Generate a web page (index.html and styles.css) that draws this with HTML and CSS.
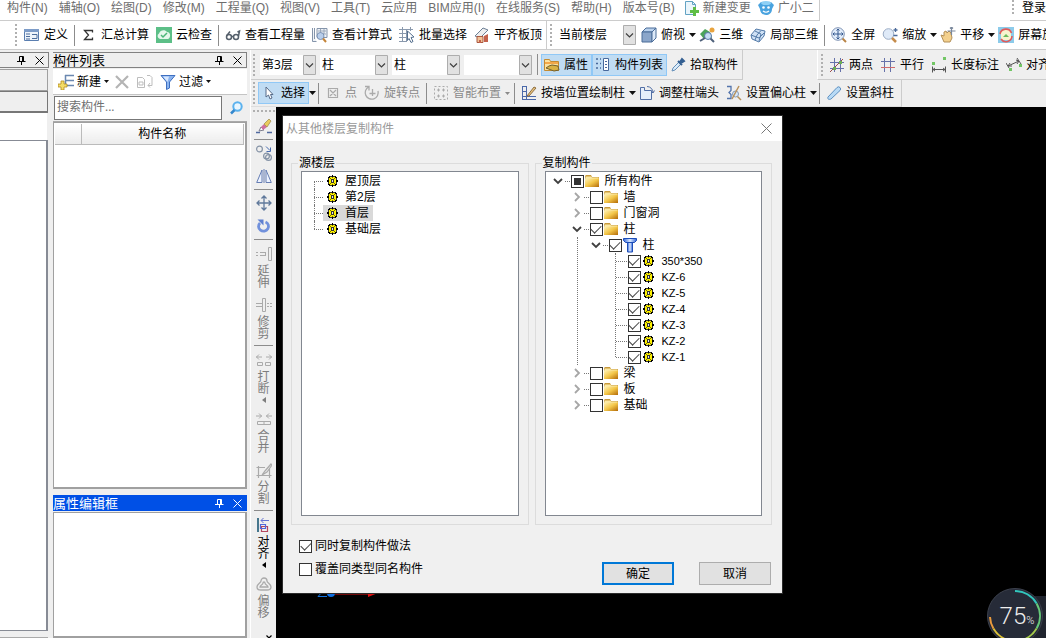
FILE: index.html
```html
<!DOCTYPE html>
<html lang="zh-CN">
<head>
<meta charset="utf-8">
<title>从其他楼层复制构件</title>
<link rel="stylesheet" href="styles.css">
</head>
<body>
<svg class="defs" aria-hidden="true">
  <linearGradient id="gold" x1="0" y1="0" x2="1" y2="1"><stop offset="0" stop-color="#fff3b8"/><stop offset=".5" stop-color="#f3c648"/><stop offset="1" stop-color="#b36a08"/></linearGradient>
  <linearGradient id="blue" x1="0" y1="0" x2="1" y2="0"><stop offset="0" stop-color="#2f63d8"/><stop offset=".5" stop-color="#dcebff"/><stop offset="1" stop-color="#2f63d8"/></linearGradient>
  <symbol id="folder" viewBox="0 0 16 16"><path d="M1 3L2 2h5l1 2h7v10H1z" fill="#c89a3c"/><path d="M1.500 3.500h5.500l1 1h6.500v2H1.500z" fill="#fbe9a5"/><path d="M1 5.500h14V14H1z" fill="url(#gold)"/></symbol>
  <symbol id="gear" viewBox="0 0 16 16"><path d="M7 2h1v2H7zM7 12h1v2H7zM2 7h2v2H2zM11 7h2v2h-2zM3 4h2v1H3zM10 4h2v1h-2zM3 11h2v1H3zM10 11h2v1h-2zM4 3h1v1H4zM10 3h1v1h-1zM4 12h1v1H4zM10 12h1v1h-1z" fill="#000"/><path d="M5 3h2v1H5zM8 3h2v1H8zM5 12h2v1H5zM8 12h2v1H8zM3 5h1v2H3zM3 9h1v2H3zM11 5h1v2h-1zM11 9h1v2h-1z" fill="#333"/><path d="M4 5h1V4h5v1h1v6h-1v1H5v-1H4z" fill="#fff200"/><path d="M6 6h3v4H6z" fill="#333"/><path d="M7 4h1v1H7zM7 11h1v1H7zM5 5h1v1H5zM9 5h1v1H9zM5 10h1v1H5zM9 10h1v1H9z" fill="#777200"/><path d="M7 7h1v2H7z" fill="#e8e8e8"/></symbol>
  <symbol id="column" viewBox="0 0 16 16"><path d="M1.500 1.500h13v2l-2 2h-9l-2-2z" fill="url(#blue)" stroke="#1c4db8"/><path d="M5.500 5.500h5v9.500h-5z" fill="url(#blue)" stroke="#1c4db8"/></symbol>
  <symbol id="down" viewBox="0 0 14 16"><path d="M3 6l4 4 4-4" fill="none" stroke="#404040" stroke-width="1.800"/></symbol>
  <symbol id="right" viewBox="0 0 14 16"><path d="M5 4l4 4-4 4" fill="none" stroke="#a6a6a6" stroke-width="1.800"/></symbol>
  <symbol id="caret" viewBox="0 0 7 4"><path d="M0 0h7L3.500 4z" fill="currentColor"/></symbol>
  <symbol id="combo" viewBox="0 0 13 20"><path d="M.5.5h12v19H.5z" fill="#e1e1e1" stroke="#adadad"/><path d="M3 8.500l3.500 3.500L10 8.500" fill="none" stroke="#404040" stroke-width="1.200"/></symbol>
  <symbol id="pin" viewBox="0 0 9 9"><path d="M2.500 5.500V.5h4v5M5.500 1v5M0 5.500h8.500M4.500 6v3" fill="none" stroke="currentColor"/></symbol>
  <symbol id="close" viewBox="0 0 9 9"><path d="M.5.5l8 8M8.500.5l-8 8" fill="none" stroke="currentColor"/></symbol>
</svg>

<div class="app">
  <nav class="menubar" aria-label="菜单">
    <div class="menus">
      <button>构件(N)</button><button>辅轴(O)</button><button>绘图(D)</button><button>修改(M)</button><button>工程量(Q)</button><button>视图(V)</button><button>工具(T)</button><button>云应用</button><button>BIM应用(I)</button><button>在线服务(S)</button><button>帮助(H)</button><button>版本号(B)</button>
    </div>
    <div class="menu-extra">
      <button><svg class="ic" viewBox="0 0 16 16"><path d="M2.500 1.500h7l3 3v10h-10z" fill="#eaf5fb" stroke="#63a3c4"/><path d="M9.500 1.500v3h3" fill="none" stroke="#63a3c4"/><path d="M10 7h3v3h3v3h-3v3h-3v-3H7v-3h3z" fill="#5fbd45"/></svg>新建变更</button>
      <button><svg class="ic" viewBox="0 0 16 16"><path d="M3 2h10l3 3-2 4c0 4-3 6-6 6s-6-2-6-6L0 5z" fill="#4aa3df"/><ellipse cx="8" cy="3" rx="5" ry="2" fill="#8fd0f5"/><circle cx="5.500" cy="7.500" r="1.300" fill="#fff"/><circle cx="10.500" cy="7.500" r="1.300" fill="#fff"/><path d="M5 11q3 2.500 6 0" fill="none" stroke="#fff" stroke-width="1.200"/></svg>广小二</button>
    </div>
    <div class="login"><i class="grip"></i><button>登录</button></div>
  </nav>

  <div class="toolbar main-tools" role="toolbar" aria-label="常用">
    <i class="grip"></i>
    <button class="tool"><svg class="ic" viewBox="0 0 16 16"><path d="M.5 2.500h14v11H.5z" fill="#eef4fb" stroke="#5a7eb0"/><path d="M0 2h15v3H0z" fill="#7d9cc8"/><path d="M2 7h4M2 9.500h4M2 12h4M8 7.500h5v4H8" fill="none" stroke="#4c6d9c"/></svg>定义</button>
    <i class="sep"></i>
    <button class="tool"><svg class="ic" viewBox="0 0 16 16"><path d="M11.500 5.500V3.500H3.500L7.500 8l-4 4.500h8V10.500" fill="none" stroke="#333" stroke-width="1.300"/></svg>汇总计算</button>
    <button class="tool"><svg class="ic" viewBox="0 0 16 16"><path d="M0 0h16v16H0z" fill="#5cbf87"/><path d="M4 12a3 3 0 0 1-1-5.500C4 3 9 2 11 5c4 0 4 6 1 7z" fill="#e5f7ec"/><path d="M5 8l2 2 4-4" fill="none" stroke="#4bb779" stroke-width="1.500"/></svg>云检查</button>
    <i class="sep"></i>
    <button class="tool"><svg class="ic" viewBox="0 0 16 16"><g fill="none" stroke="#56606c" stroke-width="1.500"><circle cx="4" cy="10" r="2.500"/><circle cx="11" cy="10" r="2.500"/><path d="M6.500 9.500h2M1.500 9L5 4.500M13.500 9l1-5-2 1"/></g></svg>查看工程量</button>
    <button class="tool"><svg class="ic" viewBox="0 0 16 16"><path d="M.5 1v13.500h4M2.500 1v11M5 1.500h10v9H5z" fill="#eef2f7" stroke="#8494aa"/><path d="M6 4h8M6 7h8M8.500 2v5M12 2v5" stroke="#9aa8ba"/><circle cx="8.500" cy="9" r="3.500" fill="#b7cdea" stroke="#7b92b4"/><path d="M11 11.500L14 15" stroke="#c48438" stroke-width="2"/></svg>查看计算式</button>
    <button class="tool"><svg class="ic" viewBox="0 0 16 16"><path d="M0 2.500h14M0 6.500h9M0 10.500h8M0 14.500h8M3.500 0v15M7.500 2v13M11.500 0v4" stroke="#8a99ad"/><path d="M8.500 4l6.500 6-3 .5 2 4-2 1-2-4-1.500 2z" fill="#fff" stroke="#56708f"/></svg>批量选择</button>
    <button class="tool"><svg class="ic" viewBox="0 0 16 16"><path d="M1 9l8-8 5 2-8 8z" fill="#eee" stroke="#6c7f95"/><path d="M3 9.500h6v6H3z" fill="#f1c398" stroke="#aa5940"/><path d="M5 13h2v3H5zM10 9l4-2v8h-4z" fill="#c4624b"/></svg>平齐板顶</button>
    <div class="group-edge"><i class="grip"></i>
      <span class="combo wide"><select aria-label="楼层范围"><option>当前楼层</option></select><svg><use href="#combo"/></svg></span>
    </div>
    <button class="tool"><svg class="ic" viewBox="0 0 16 16"><path d="M1 5l4-4h10l-4 4z" fill="#b9d1ed" stroke="#4a6c98"/><path d="M1 5h10v10H1z" fill="#8ba6ca" stroke="#4a6c98"/><path d="M11 5l4-4v10l-4 4z" fill="#dce9f8" stroke="#4a6c98"/></svg>俯视<svg class="car"><use href="#caret"/></svg></button>
    <button class="tool"><svg class="ic" viewBox="0 0 16 16"><path d="M1 7l5-5 5 3 2 6-8 1z" fill="#4ca35b"/><circle cx="13" cy="3" r="2.500" fill="#e8a33d"/><circle cx="9" cy="9" r="3.500" fill="#c5dcf3" stroke="#5a7aa8"/><path d="M1 14l5-3M11.500 11.500L15 15" stroke="#4e607a" stroke-width="2"/></svg>三维</button>
    <button class="tool"><svg class="ic" viewBox="0 0 16 16"><path d="M1 8l5-6 9 2-1 5-5 6-7-3z" fill="#cfe1f5" stroke="#537aa8"/><path d="M5 4l6 3-2 7M11 3.500L7 8l-2 5M1 8l8 3 5-5" fill="none" stroke="#537aa8"/></svg>局部三维</button>
    <i class="sep"></i>
    <button class="tool"><svg class="ic" viewBox="0 0 16 16"><circle cx="7" cy="7" r="6.300" fill="#e1ecfa" stroke="#7f93b4"/><path d="M7 2v10M2 7h10M5.500 3.500L7 2l1.500 1.500M5.500 10.500L7 12l1.500-1.500M3.500 5.500L2 7l1.500 1.500M10.500 5.500L12 7l-1.500 1.500" fill="none" stroke="#35598f"/><path d="M11.500 11.500L15 15" stroke="#b98446" stroke-width="2"/></svg>全屏</button>
    <button class="tool"><svg class="ic" viewBox="0 0 16 16"><circle cx="6.500" cy="7" r="5.300" fill="#dfeaf8" stroke="#9cadc6"/><path d="M10 11l4 4" stroke="#c58c4b" stroke-width="2.500"/><path d="M13.500 1v4M11.500 3h4M11.500 8.500h4" stroke="#4c6b9b" stroke-width="1.300"/></svg>缩放<svg class="car"><use href="#caret"/></svg></button>
    <button class="tool"><svg class="ic" viewBox="0 0 16 16"><path d="M1 8l3 1V5l2-1 1 2 2-2 2 2 1 5-2 4H4z" fill="#f3d08d" stroke="#b28f58"/><path d="M11.500 0v8M7.500 4h8M10 1.500L11.500 0 13 1.500" fill="none" stroke="#7a889c" stroke-width="1.200"/></svg>平移<svg class="car"><use href="#caret"/></svg></button>
    <button class="tool"><svg class="ic" viewBox="0 0 16 16"><path d="M0 0h16v16H0z" fill="#8ccbea"/><path d="M3 3h10v10H3z" fill="#f7f3cf"/><path d="M2 7a6 6 0 0 1 11.500-1M14 9a6 6 0 0 1-11 3" fill="none" stroke="#e15b5b" stroke-width="1.600"/><path d="M5 10l3-3 3 3z" fill="#6bba5d"/></svg>屏幕旋</button>
  </div>

  <div class="workspace">
    <aside class="dock-left">
      <header class="dock-title"><span class="grow"></span><button aria-label="固定"><svg><use href="#pin"/></svg></button><button aria-label="关闭"><svg><use href="#close"/></svg></button></header>
      <div class="tab-box"></div><div class="tab-box strong"></div><div class="blank-box"></div><div class="nav-box"></div><div class="dock-foot"></div>
    </aside>

    <aside class="dock">
      <section class="list-panel">
        <header class="dock-title"><h2 class="grow">构件列表</h2><button aria-label="固定"><svg><use href="#pin"/></svg></button><button aria-label="关闭"><svg><use href="#close"/></svg></button></header>
        <div class="list-tools">
          <button class="tool"><svg class="ic" viewBox="0 0 16 16"><path d="M7 1.500h9M7 6.500h9M7 11.500h9M7.500 1v11" fill="none" stroke="#6a87b0" stroke-width="1.500"/><path d="M3 7h3v3h3v3H6v3H3v-3H0v-3h3z" fill="#f4dc67" stroke="#b38b20" stroke-width=".8"/></svg>新建<svg class="car small"><use href="#caret"/></svg></button>
          <button class="tool" aria-label="删除"><svg class="ic" viewBox="0 0 16 16"><path d="M2 2l12 12M14 2L2 14" stroke="#b4b4b4" stroke-width="2.200"/></svg></button>
          <button class="tool" aria-label="复制"><svg class="ic" viewBox="0 0 16 16"><path d="M.5 3.500h5l2 2v8h-7zM2 8h4v3H2zM10 1.500h3l2 2v8h-4M13 9l-2 2.500 2 2" fill="none" stroke="#bdbdbd"/></svg></button>
          <button class="tool"><svg class="ic" viewBox="0 0 16 16"><path d="M1 1.500h14L9.500 8v6l-3 1.500V8z" fill="#8bb4ef" stroke="#3e6fc1"/><path d="M3 2.500h6L7.500 8" fill="#d8e8ff"/></svg>过滤<svg class="car small"><use href="#caret"/></svg></button>
        </div>
        <div class="search"><input type="text" placeholder="搜索构件..." aria-label="搜索构件"><button aria-label="搜索"><svg class="ic" viewBox="0 0 16 16"><circle cx="9.500" cy="6.500" r="4.200" fill="#e9f6ff" stroke="#5bb2ee" stroke-width="2"/><path d="M6.500 10L3 13.500" stroke="#3388ce" stroke-width="2.500"/></svg></button></div>
        <div class="sheet"><table><thead><tr><th class="num"></th><th>构件名称</th></tr></thead></table></div>
      </section>
      <section class="prop-panel">
        <header class="dock-title active"><h2 class="grow">属性编辑框</h2><button aria-label="固定"><svg><use href="#pin"/></svg></button><button aria-label="关闭"><svg><use href="#close"/></svg></button></header>
        <div class="sheet"></div>
      </section>
    </aside>

    <div class="editor">
      <div class="tool-row">
        <div class="toolbar ctx" role="toolbar" aria-label="构件">
          <i class="grip"></i>
          <span class="combos">
            <span class="combo short"><select aria-label="楼层"><option>第3层</option></select><svg><use href="#combo"/></svg></span>
            <span class="combo"><select aria-label="构件大类"><option>柱</option></select><svg><use href="#combo"/></svg></span>
            <span class="combo"><select aria-label="构件类型"><option>柱</option></select><svg><use href="#combo"/></svg></span>
            <span class="combo"><select aria-label="构件"><option></option></select><svg><use href="#combo"/></svg></span>
          </span>
          <i class="sep"></i>
          <button class="tool on"><svg class="ic" viewBox="0 0 16 16"><path d="M.5 2.500h5l1 2h8v9H.5z" fill="#fbe2a0" stroke="#c48b31"/><path d="M1 5h13v2H1z" fill="#f2a84b"/><path d="M2 11l3-2 3-1 6 1 1 4-5 1z" fill="#d9b244" stroke="#73602c"/></svg>属性</button>
          <button class="tool on"><svg class="ic" viewBox="0 0 16 16"><path d="M1 2h2M1 6.500h2M1 11h2M5 2h1M5 6.500h1M5 11h1" stroke="#48699c" stroke-width="1.500"/><path d="M8.500 1.500h5v12h-5z" fill="#fff" stroke="#48699c"/><path d="M10 4.500h2M10 7.500h2M10 10.500h2" stroke="#48699c"/></svg>构件列表</button>
          <button class="tool"><svg class="ic" viewBox="0 0 16 16"><path d="M2 14l1-3 6-6 2 2-6 6z" fill="#d9ebfa" stroke="#6690b9"/><path d="M8 4l4 4M10 5l2-3 2 2-3 2z" fill="#345f91" stroke="#345f91" stroke-width="2"/></svg>拾取构件</button>
        </div>
        <div class="toolbar axis" role="toolbar" aria-label="轴线">
          <i class="grip"></i>
          <button class="tool"><svg class="ic" viewBox="0 0 16 16"><path d="M5.500 1v14M11.500 1v14M1 5.500h14M1 11.500h14" stroke="#6672aa"/><path d="M1 15L14 2" stroke="#9d4a49"/><path d="M4 10h3v3H4zM10 4h3v3h-3z" fill="#6cae54"/></svg>两点</button>
          <button class="tool"><svg class="ic" viewBox="0 0 16 16"><path d="M4.500 1v14M10.500 1v14M1 4.500h14" stroke="#6672aa"/><path d="M1 10.500h14" stroke="#d06c6c"/></svg>平行</button>
          <button class="tool"><svg class="ic" viewBox="0 0 16 16"><path d="M1 5h3v3H1zM12 0h3v3h-3z" fill="#72c665"/><path d="M1.500 9.500v6M14.500 9.500v6M2 12.500h12M4 11l-2 1.500L4 14M12 11l2 1.500-2 1.500" fill="none" stroke="#555"/></svg>长度标注</button>
          <button class="tool"><svg class="ic" viewBox="0 0 16 16"><path d="M0 6l3 5M11 1l4 6M2 9l11-5M4 6L2 9l4 0M10 3l3 1-2 3" fill="none" stroke="#555"/><path d="M3 11h3v3H3zM13 7h3v3h-3z" fill="#72c665"/></svg>对齐</button>
        </div>
      </div>
      <div class="tool-row">
        <div class="toolbar draw" role="toolbar" aria-label="绘制">
          <i class="grip"></i>
          <button class="tool on"><svg class="ic" viewBox="0 0 16 16"><path d="M5 2v10l2.500-2 1.500 4 2-1-1.500-3.500H12z" fill="#fff" stroke="#566b88"/></svg>选择</button><button class="split" aria-label="选择方式"><svg class="car"><use href="#caret"/></svg></button>
          <i class="sep"></i>
          <button class="tool" disabled><svg class="ic" viewBox="0 0 16 16"><path d="M3.500 3.500h9v9h-9zM5 5l6 6M11 5l-6 6" fill="none" stroke="#aaa" stroke-width="1.200"/></svg>点</button>
          <button class="tool" disabled><svg class="ic" viewBox="0 0 16 16"><path d="M1 1.500h4v4M4.500 2A6.500 6.500 0 1 0 14 6M8.500 4v7M5.500 8.500h6" fill="none" stroke="#aaa" stroke-width="1.300"/></svg>旋转点</button>
          <i class="sep"></i>
          <button class="tool" disabled><svg class="ic" viewBox="0 0 16 16"><path d="M1.500 1.500h13v13h-13z" fill="none" stroke="#aaa" stroke-dasharray="2 2"/><path d="M4 5h3M5.500 3.500v3M9 5h3M10.500 3.500v3M4 11h3M5.500 9.500v3M9 11h3M10.500 9.500v3" stroke="#aaa"/></svg>智能布置<svg class="car small"><use href="#caret"/></svg></button>
          <i class="sep"></i>
          <button class="tool"><svg class="ic" viewBox="0 0 16 16"><path d="M1.500 1v14M5.500 1v14M1 1.500h4M1 6.500h4M1 11.500h14M1 14.500h14" fill="none" stroke="#4b69a9"/><path d="M6 11l7-9 2 1-7 8z" fill="#e8c27d" stroke="#8d6f42"/></svg>按墙位置绘制柱<svg class="car"><use href="#caret"/></svg></button>
          <button class="tool"><svg class="ic" viewBox="0 0 16 16"><path d="M1.500 2.500h4v3h7v9h-11z" fill="#e6effb" stroke="#526fa5"/><path d="M8 1.500a6 6 0 0 1 6 6M12 6l2 2 1.500-2.500" fill="none" stroke="#526fa5"/></svg>调整柱端头</button>
          <button class="tool"><svg class="ic" viewBox="0 0 16 16"><path d="M1 1.500h4v4l-2 2 2 2v4H1" fill="none" stroke="#5374ac" stroke-width="1.300"/><circle cx="9.500" cy="9" r="3" fill="#d7e8fa" stroke="#8499b5"/><path d="M13 1L6 14M11.500 11.500L15 15" stroke="#b8915b" stroke-width="1.500"/></svg>设置偏心柱<svg class="car"><use href="#caret"/></svg></button>
          <i class="sep"></i>
          <button class="tool"><svg class="ic" viewBox="0 0 16 16"><path d="M2 12L11 2.500a2 2 0 0 1 3 3L5 14c-2 1-4 0-3-2z" fill="#b8daf5" stroke="#5e91c2"/></svg>设置斜柱</button>
        </div>
      </div>

      <div class="stage">
        <div class="side-tools" role="toolbar" aria-label="修改">
          <i class="grip-h"></i>
          <button aria-label="刷子"><svg class="ic" viewBox="0 0 16 16"><path d="M0 14.500h4M11 14.500h5" stroke="#506aa0" stroke-width="1.500"/><path d="M3 13l2-4 3 3z" fill="#fff" stroke="#7c7c8c"/><path d="M5 9l3-3 3 3-4 3z" fill="#cf6fa0"/><path d="M8 6l5-5 2 2-4 6z" fill="#eacb5d" stroke="#9b8648" stroke-width=".7"/></svg></button>
          <i class="rule"></i>
          <button aria-label="复制"><svg class="ic" viewBox="0 0 16 16"><g fill="none" stroke="#8593a6" stroke-width="1.200"><circle cx="3.500" cy="4" r="2.900"/><circle cx="10.500" cy="11" r="2.900"/><circle cx="12.500" cy="12.500" r="2.900"/></g><path d="M10 1.500l4 4M14.500 2.500v4h-4" fill="none" stroke="#476bb0"/></svg></button>
          <button aria-label="镜像"><svg class="ic" viewBox="0 0 16 16"><path d="M6 2v12.500H.7zM10 2v12.500h5.300z" fill="#edf3ff" stroke="#657db3"/><path d="M8 1v14" stroke="#657db3"/></svg></button>
          <i class="rule"></i>
          <button aria-label="移动"><svg class="ic" viewBox="0 0 16 16"><path d="M8 1v14M1 8h14M5.500 3.500L8 1l2.500 2.500M5.500 12.500L8 15l2.500-2.500M3.500 5.500L1 8l2.500 2.500M12.500 5.500L15 8l-2.500 2.500" fill="none" stroke="#60799b" stroke-width="1.300"/></svg></button>
          <button aria-label="旋转"><svg class="ic" viewBox="0 0 16 16"><path d="M4 5A5 4.800 0 1 0 9.500 4" fill="none" stroke="#7191dc" stroke-width="2.800"/><path d="M1.500 1.500h6v6z" fill="#5f80d0"/></svg></button>
          <i class="rule"></i>
          <button class="vt" disabled><svg class="ic" viewBox="0 0 16 16"><path d="M12.500 1.500h3v13h-3zM0 6.500h2M0 9.500h2M4 6.500h6M4 9.500h6M9.500 6v4" fill="none" stroke="#aaa"/></svg><span>延伸</span></button>
          <button class="vt" disabled><svg class="ic" viewBox="0 0 16 16"><path d="M6.500 1.500h3v13h-3zM0 6.500h6M0 9.500h6M11 6.500h2M14 6.500h2M11 9.500h2M14 9.500h2" fill="none" stroke="#aaa"/></svg><span>修剪</span></button>
          <i class="rule"></i>
          <button class="vt" disabled><svg class="ic" viewBox="0 0 16 16"><path d="M0 5h6M3 2.500L.5 5 3 7.500M10 5h6M13 2.500L15.500 5 13 7.500M1.500 10.500h5v3h-5zM9.500 10.500h5v3h-5z" fill="none" stroke="#aaa"/></svg><span>打断</span><svg class="vc" viewBox="0 0 4 6"><path d="M4 0v6L0 3z" fill="currentColor"/></svg></button>
          <button class="vt" disabled><svg class="ic" viewBox="0 0 16 16"><path d="M0 5h6M3 2.500L5.500 5 3 7.500M10 5h6M13 2.500L10.500 5 13 7.500M1.500 10.500h13v3h-13zM8 10.500v3" fill="none" stroke="#aaa"/></svg><span>合并</span></button>
          <button class="vt" disabled><svg class="ic" viewBox="0 0 16 16"><path d="M.5 5.500H9M.5 13.500h15M2.500 4v12M13.500 7v9M6 13l3-4 6-7 1 1-5 7z" fill="none" stroke="#aaa" stroke-width="1.200"/></svg><span>分割</span></button>
          <i class="rule"></i>
          <button class="vt"><svg class="ic" viewBox="0 0 16 16"><path d="M1 1h2v14H1z" fill="#47778d"/><path d="M5 3.500h8M7.500 1L5 3.500 7.500 6" fill="none" stroke="#6472d1"/><path d="M5.500 9.500h6v5h-6z" fill="none" stroke="#b4475f" stroke-width="1.200"/><path d="M4.500 7.500h5v4h-5z" fill="none" stroke="#4f67db" stroke-width="1.200"/></svg><span>对齐</span><svg class="vc" viewBox="0 0 4 6"><path d="M4 0v6L0 3z" fill="currentColor"/></svg></button>
          <button class="vt" disabled><svg class="ic" viewBox="0 0 16 16"><path d="M5 5a3 3 0 0 1 6 0c0 2 4 3 4 6s-2 3-4 3H5c-2 0-4 0-4-3s4-4 4-6zM7 7c0 2-3 2-3 4h8c0-2-3-2-3-4a1 1 0 0 0-2 0z" fill="none" stroke="#aaa" stroke-width="1.300"/></svg><span>偏移</span></button>
          <button class="more" aria-label="更多"><svg viewBox="0 0 6 8"><path d="M.5.5L3 3 5.500.5M.5 4.500L3 7l2.500-2.500" fill="none" stroke="#000" stroke-width="1.200"/></svg></button>
        </div>

        <main class="canvas">
          <svg class="ucs" viewBox="0 0 70 12" aria-hidden="true"><path d="M10 0L2 8.500h9" fill="none" stroke="#1474e0"/><circle cx="15" cy="5" r="4" fill="#0f6ee0"/><path d="M19 5.500h36" stroke="#e01010" stroke-width="2"/><path d="M52 1l10 4-10 4z" fill="#e01010"/></svg>

          <section class="dialog" role="dialog" aria-labelledby="dlg-title">
            <header class="dlg-head"><h1 id="dlg-title">从其他楼层复制构件</h1><button aria-label="关闭"><svg viewBox="0 0 11 11"><path d="M.5.5l10 10M10.500.5l-10 10" stroke="#777"/></svg></button></header>
            <div class="columns">
              <fieldset><legend>源楼层</legend>
                <ul class="tree floors">
                  <li><i class="stem"></i><div class="node"><svg class="ic"><use href="#gear"/></svg><span>屋顶层</span></div></li>
                  <li><i class="stem"></i><div class="node"><svg class="ic"><use href="#gear"/></svg><span>第2层</span></div></li>
                  <li><i class="stem"></i><div class="node picked"><svg class="ic"><use href="#gear"/></svg><span>首层</span></div></li>
                  <li><i class="stem"></i><div class="node"><svg class="ic"><use href="#gear"/></svg><span>基础层</span></div></li>
                </ul>
              </fieldset>
              <fieldset><legend>复制构件</legend>
                <ul class="tree parts">
                  <li><div class="row"><svg class="chev"><use href="#down"/></svg><i class="dots"></i><label><input type="checkbox" class="mixed"><svg class="ic"><use href="#folder"/></svg>所有构件</label></div>
                    <ul class="kids">
                      <li><div class="row"><svg class="chev"><use href="#right"/></svg><i class="dots"></i><label><input type="checkbox"><svg class="ic"><use href="#folder"/></svg>墙</label></div></li>
                      <li><div class="row"><svg class="chev"><use href="#right"/></svg><i class="dots"></i><label><input type="checkbox"><svg class="ic"><use href="#folder"/></svg>门窗洞</label></div></li>
                      <li><div class="row"><svg class="chev"><use href="#down"/></svg><i class="dots"></i><label><input type="checkbox" checked><svg class="ic"><use href="#folder"/></svg>柱</label></div>
                        <ul class="kids lined">
                          <li><div class="row"><svg class="chev"><use href="#down"/></svg><i class="dots"></i><label><input type="checkbox" checked><svg class="ic"><use href="#column"/></svg>柱</label></div>
                            <ul class="leaves">
                              <li class="row"><i class="stem"></i><label><input type="checkbox" checked><svg class="ic"><use href="#gear"/></svg>350*350</label></li>
                              <li class="row"><i class="stem"></i><label><input type="checkbox" checked><svg class="ic"><use href="#gear"/></svg>KZ-6</label></li>
                              <li class="row"><i class="stem"></i><label><input type="checkbox" checked><svg class="ic"><use href="#gear"/></svg>KZ-5</label></li>
                              <li class="row"><i class="stem"></i><label><input type="checkbox" checked><svg class="ic"><use href="#gear"/></svg>KZ-4</label></li>
                              <li class="row"><i class="stem"></i><label><input type="checkbox" checked><svg class="ic"><use href="#gear"/></svg>KZ-3</label></li>
                              <li class="row"><i class="stem"></i><label><input type="checkbox" checked><svg class="ic"><use href="#gear"/></svg>KZ-2</label></li>
                              <li class="row"><i class="stem"></i><label><input type="checkbox" checked><svg class="ic"><use href="#gear"/></svg>KZ-1</label></li>
                            </ul>
                          </li>
                        </ul>
                      </li>
                      <li><div class="row"><svg class="chev"><use href="#right"/></svg><i class="dots"></i><label><input type="checkbox"><svg class="ic"><use href="#folder"/></svg>梁</label></div></li>
                      <li><div class="row"><svg class="chev"><use href="#right"/></svg><i class="dots"></i><label><input type="checkbox"><svg class="ic"><use href="#folder"/></svg>板</label></div></li>
                      <li><div class="row"><svg class="chev"><use href="#right"/></svg><i class="dots"></i><label><input type="checkbox"><svg class="ic"><use href="#folder"/></svg>基础</label></div></li>
                    </ul>
                  </li>
                </ul>
              </fieldset>
            </div>
            <footer class="dlg-foot">
              <div class="options"><label><input type="checkbox" checked>同时复制构件做法</label><label><input type="checkbox">覆盖同类型同名构件</label></div>
              <div class="actions"><button class="primary">确定</button><button>取消</button></div>
            </footer>
          </section>

          <div class="gauge">
            <svg viewBox="0 0 56 56" aria-hidden="true"><circle cx="28" cy="28" r="27.500" fill="#262b38" stroke="#3c414d"/><g fill="none" stroke-width="2"><path d="M28 3a25 25 0 0 1 21.600 12.500" stroke="#32c6bd"/><path d="M49.600 15.500A25 25 0 0 1 49.600 40.500" stroke="#66c878"/><path d="M49.600 40.500A25 25 0 0 1 28 53" stroke="#a4c94c"/><path d="M28 53A25 25 0 0 1 6.400 40.500" stroke="#dcc238"/><path d="M6.400 40.500A25 25 0 0 1 3 29" stroke="#e99a3d"/></g></svg>
            <span class="value">75<small>%</small></span>
          </div>
        </main>
      </div>
    </div>
  </div>
</div>
</body>
</html>
```
FILE: styles.css
```css
* { box-sizing: border-box; }

body {
  margin: 0;
  font: 12px/16px "Open Sans", "Noto Sans CJK SC", sans-serif;
  color: #000;
  background: #efefef;
}

button, input, select { font: inherit; color: inherit; }
button { display: flex; align-items: center; padding: 0; border: 0; background: none; white-space: nowrap; }
h1, h2 { margin: 0; font-size: 12px; font-weight: 400; }
ul { margin: 0; padding: 0; list-style: none; }
svg { display: block; flex: none; }

.defs { position: absolute; width: 0; height: 0; }
.ic { width: 16px; height: 16px; }
.grow { flex: 1; }

.app { display: flex; flex-direction: column; height: 100vh; overflow: hidden; }

/* Menu bar */
.menubar { display: flex; flex: none; height: 21px; background: #fff; color: #6d6d6d; font-family: "Liberation Sans", "Noto Sans CJK SC", sans-serif; overflow: hidden; }
.menus, .menu-extra { display: flex; align-items: flex-start; border-bottom: 1px solid #ccc; }
.menus { gap: 11px; padding-left: 7px; }
.menu-extra { gap: 7px; padding: 0 5px 0 8px; border-right: 1px solid #ccc; }
.menu-extra button { gap: 4px; }
.login { display: flex; gap: 8px; width: 36px; margin-left: auto; padding-left: 2px; border-bottom: 1px solid #ccc; color: #000; }
.login button { height: 16px; }

.grip { flex: none; width: 2px; height: 22px; background: repeating-linear-gradient(#b0b0b0 0 2px, transparent 2px 4px); }
.login .grip { height: 16px; }
.grip-h { flex: none; width: 22px; height: 2px; margin-bottom: 6px; background: repeating-linear-gradient(90deg, #b0b0b0 0 2px, transparent 2px 4px); }

/* Toolbars */
.toolbar { display: flex; align-items: center; flex: none; }
.tool { flex: none; gap: 4px; height: 22px; padding: 0 4px 0 3px; }
.tool:disabled { color: #8a8a8a; }
.on { background: #c0dcf3; box-shadow: inset 0 0 0 1px #90c8f6; }
.car { width: 7px; height: 4px; color: #111; }
.car.small { width: 5px; height: 3px; }
.tool .car { margin-right: -4px; }
.tool .car.small { margin-right: -2px; }
.tool:disabled .car { color: #8a8a8a; }
.split { flex: none; height: 22px; }
.sep { flex: none; width: 1px; height: 21px; margin: 0 3px 0 2px; background: #8c8c8c; }

.main-tools { height: 29px; padding-left: 15px; border-bottom: 1px solid #ccc; background: #fff; overflow: hidden; }
.main-tools > .grip { margin-right: 4px; }
.group-edge { display: flex; align-items: center; flex: none; gap: 5px; height: 28px; padding: 0 2px 0 3px; border-left: 1px solid #ccc; }

.combo { position: relative; display: block; flex: none; width: 68px; height: 20px; }
.combo.short { width: 56px; }
.combo.wide { width: 79px; }
.combo select { appearance: none; width: 100%; height: 20px; padding: 0 14px 0 2px; border: 0; background: #fff; }
.combo svg { position: absolute; top: 0; right: 0; width: 13px; height: 20px; pointer-events: none; }
.combos { display: flex; gap: 4px; margin: 0 3px 0 5px; }

/* Docked panels */
.workspace { display: flex; flex: 1; min-height: 0; }
.dock-left { display: flex; flex-direction: column; flex: none; width: 49px; padding-top: 2px; }
.dock { display: flex; flex-direction: column; flex: none; width: 194px; margin: 0 3px 0 4px; padding-top: 2px; }
.dock-title { display: flex; align-items: center; flex: none; gap: 9px; height: 16px; padding-right: 4px; border: 1px solid #828282; border-left: 0; font-size: 13px; }
.dock-title h2 { font-size: 13px; }
.dock-title svg { width: 9px; height: 9px; }
.dock-title.active { border-color: #0050e6; background: #0050e6; color: #fff; }

.tab-box { flex: none; height: 22px; margin-right: 1px; border: solid #a0a0a0; border-width: 1px 1px 1px 0; }
.tab-box:first-of-type { margin-top: 1px; }
.tab-box.strong { border-color: #777; border-bottom-width: 2px; }
.blank-box { flex: none; height: 27px; margin-right: 2px; background: #fff; }
.nav-box { flex: 1; margin-right: 1px; border: solid #878b95; border-width: 1px 2px 1px 0; background: #fff; }
.dock-foot { flex: none; height: 7px; margin: 0 1px 0 0; border-bottom: 1px solid #aaa; }

.list-panel { display: flex; flex-direction: column; flex: 0 1 437px; min-height: 0; }
.list-tools { display: flex; align-items: center; flex: none; height: 26px; margin-top: 1px; padding-left: 2px; border-bottom: 1px solid #c4c4c4; background: #fff; }
.list-tools .tool { gap: 3px; }
.search { display: flex; flex: none; gap: 5px; padding: 1px 2px 1px 1px; border-bottom: 1px solid #aaa; }
.search input { flex: 1; min-width: 0; height: 24px; padding: 0 2px 4px; border: 1px solid #777; background: #fff; }
.search input::placeholder { color: #707070; opacity: 1; }
.search button { padding: 0 1px; }
.sheet { flex: 1; min-height: 0; padding: 1px; border: solid #a0a0a0; border-width: 1px 2px 2px 1px; background: #fff; }
.sheet table { width: 100%; border-collapse: collapse; }
.sheet th { height: 20px; padding: 0; border: solid #bbb; border-width: 0 1px 1px 0; background: linear-gradient(#fff, #ececec); font-weight: 400; }
.sheet .num { width: 26px; }
.prop-panel { display: flex; flex-direction: column; flex: 1; min-height: 0; margin-top: 6px; }
.prop-panel .sheet { margin-top: 1px; }

/* Editor */
.editor { display: flex; flex-direction: column; flex: 1; min-width: 0; border-left: 1px solid #fff; }
.tool-row { display: flex; flex: none; overflow: hidden; }
.ctx, .axis { height: 30px; border-bottom: 1px solid #ccc; }
.ctx { padding-left: 2px; border-right: 1px solid #ccc; }
.axis { width: 229px; margin-left: auto; padding-left: 3px; border-left: 1px solid #fff; overflow: hidden; }
.axis .grip { margin-right: 3px; }
.draw { height: 27px; padding: 0 3px 0 2px; border-right: 1px solid #ccc; border-bottom: 1px solid #ddd; }
.draw .grip { margin-right: 3px; }

.stage { display: flex; flex: 1; min-height: 0; }
.side-tools { display: flex; flex-direction: column; align-items: center; flex: none; width: 25px; padding-top: 3px; overflow: hidden; }
.side-tools button { flex: none; flex-direction: column; margin-bottom: 7px; }
.side-tools .vt { gap: 3px; padding-top: 1px; }
.side-tools .more { align-self: flex-end; margin: 9px 4px 0 0; }
.more svg { width: 6px; height: 8px; }
.vt span { width: 12px; line-height: 12px; white-space: normal; word-break: break-all; }
.vt:disabled { color: #7d7d7d; }
.vc { width: 4px; height: 6px; margin-top: -1px; }
.rule { flex: none; width: 19px; height: 1px; margin: -2px 0 5px; background: #8c8c8c; }

.canvas { position: relative; flex: 1; min-width: 0; background: #000; overflow: hidden; }
.ucs { position: absolute; top: 481px; left: 40px; width: 70px; height: 12px; }

/* Copy dialog */
.dialog { position: absolute; top: 8px; left: 6px; width: 501px; border: 1px solid #2b2b2b; background: #f0f0f0; font-family: "Liberation Sans", "Noto Sans CJK SC", sans-serif; }
.dlg-head { display: flex; align-items: center; justify-content: space-between; height: 25px; padding: 0 10px 0 3px; background: #fff; color: #999; }
.dlg-head svg { width: 11px; height: 11px; }
.columns { display: flex; gap: 6px; padding: 15px 10px 0 8px; }
fieldset { flex: 1; min-width: 0; margin: 0; padding: 1px 9px 8px 6px; border: 1px solid #dcdcdc; }
legend { padding: 0 1px; line-height: 14px; }

.tree { height: 345px; margin-left: 3px; border: 1px solid #828790; background: #fff; overflow: hidden; }
.floors { padding: 1px 0 0 12px; }
.floors li { position: relative; display: flex; height: 16px; }
.floors li::before { content: ""; position: absolute; top: 0; left: 0; height: 16px; border-left: 1px dotted #777; }
.floors li:first-child::before { top: 8px; height: 8px; }
.floors li:last-child::before { height: 8px; }
.stem { flex: none; align-self: center; width: 11px; border-top: 1px dotted #777; }
.floors .stem { width: 9px; }
.node { display: flex; gap: 4px; padding-right: 4px; }
.floors .node { padding-left: 2px; }
.picked { background: #d9d9d9; }

.parts { padding: 1px 0 0 5px; }
.row { display: flex; align-items: center; height: 16px; }
.row label { display: flex; align-items: center; gap: 4px; margin-left: 1px; }
.row .ic { margin: 0 1px 0 -4px; }
.chev { width: 14px; height: 16px; }
.dots { width: 5px; border-top: 1px dotted #777; }
.kids { margin-left: 19px; }
.kids.lined { margin-left: 7px; padding-left: 11px; border-left: 1px dotted #777; }
.leaves { position: relative; margin-left: 26px; padding-left: 1px; font-size: 11px; }
.leaves::before { content: ""; position: absolute; top: 0; bottom: 8px; left: 0; border-left: 1px dotted #777; }

input[type="checkbox"] { appearance: none; display: grid; place-items: center; flex: none; width: 13px; height: 13px; margin: 0; border: 1px solid #333; background: #fff; }
input[type="checkbox"]:checked::before { content: ""; width: 9px; height: 5px; margin-top: -3px; border: solid #444; border-width: 0 0 1px 1px; transform: rotate(-45deg); }
input.mixed::before { content: ""; width: 7px; height: 7px; background: #333; }

.dlg-foot { display: flex; justify-content: space-between; padding: 13px 11px 8px 16px; }
.options { display: flex; flex-direction: column; gap: 7px; }
.options label { display: flex; align-items: center; gap: 3px; height: 16px; }
.actions { display: flex; gap: 25px; margin-top: 24px; }
.actions button { justify-content: center; width: 72px; height: 23px; border: 1px solid #adadad; background: #e1e1e1; }
.actions .primary { border: 2px solid #0078d7; }

.gauge { position: absolute; right: 3px; bottom: -6px; width: 56px; height: 56px; }
.gauge::before { content: ""; position: absolute; top: 8px; right: -3px; width: 28px; height: 48px; background: #20242e; }
.gauge svg { position: relative; width: 56px; height: 56px; }
.value { position: absolute; inset: 0; display: flex; align-items: baseline; justify-content: center; padding-left: 4px; font: 300 24px/56px Roboto, sans-serif; color: #eee; }
.value small { font-size: 11px; }
```
